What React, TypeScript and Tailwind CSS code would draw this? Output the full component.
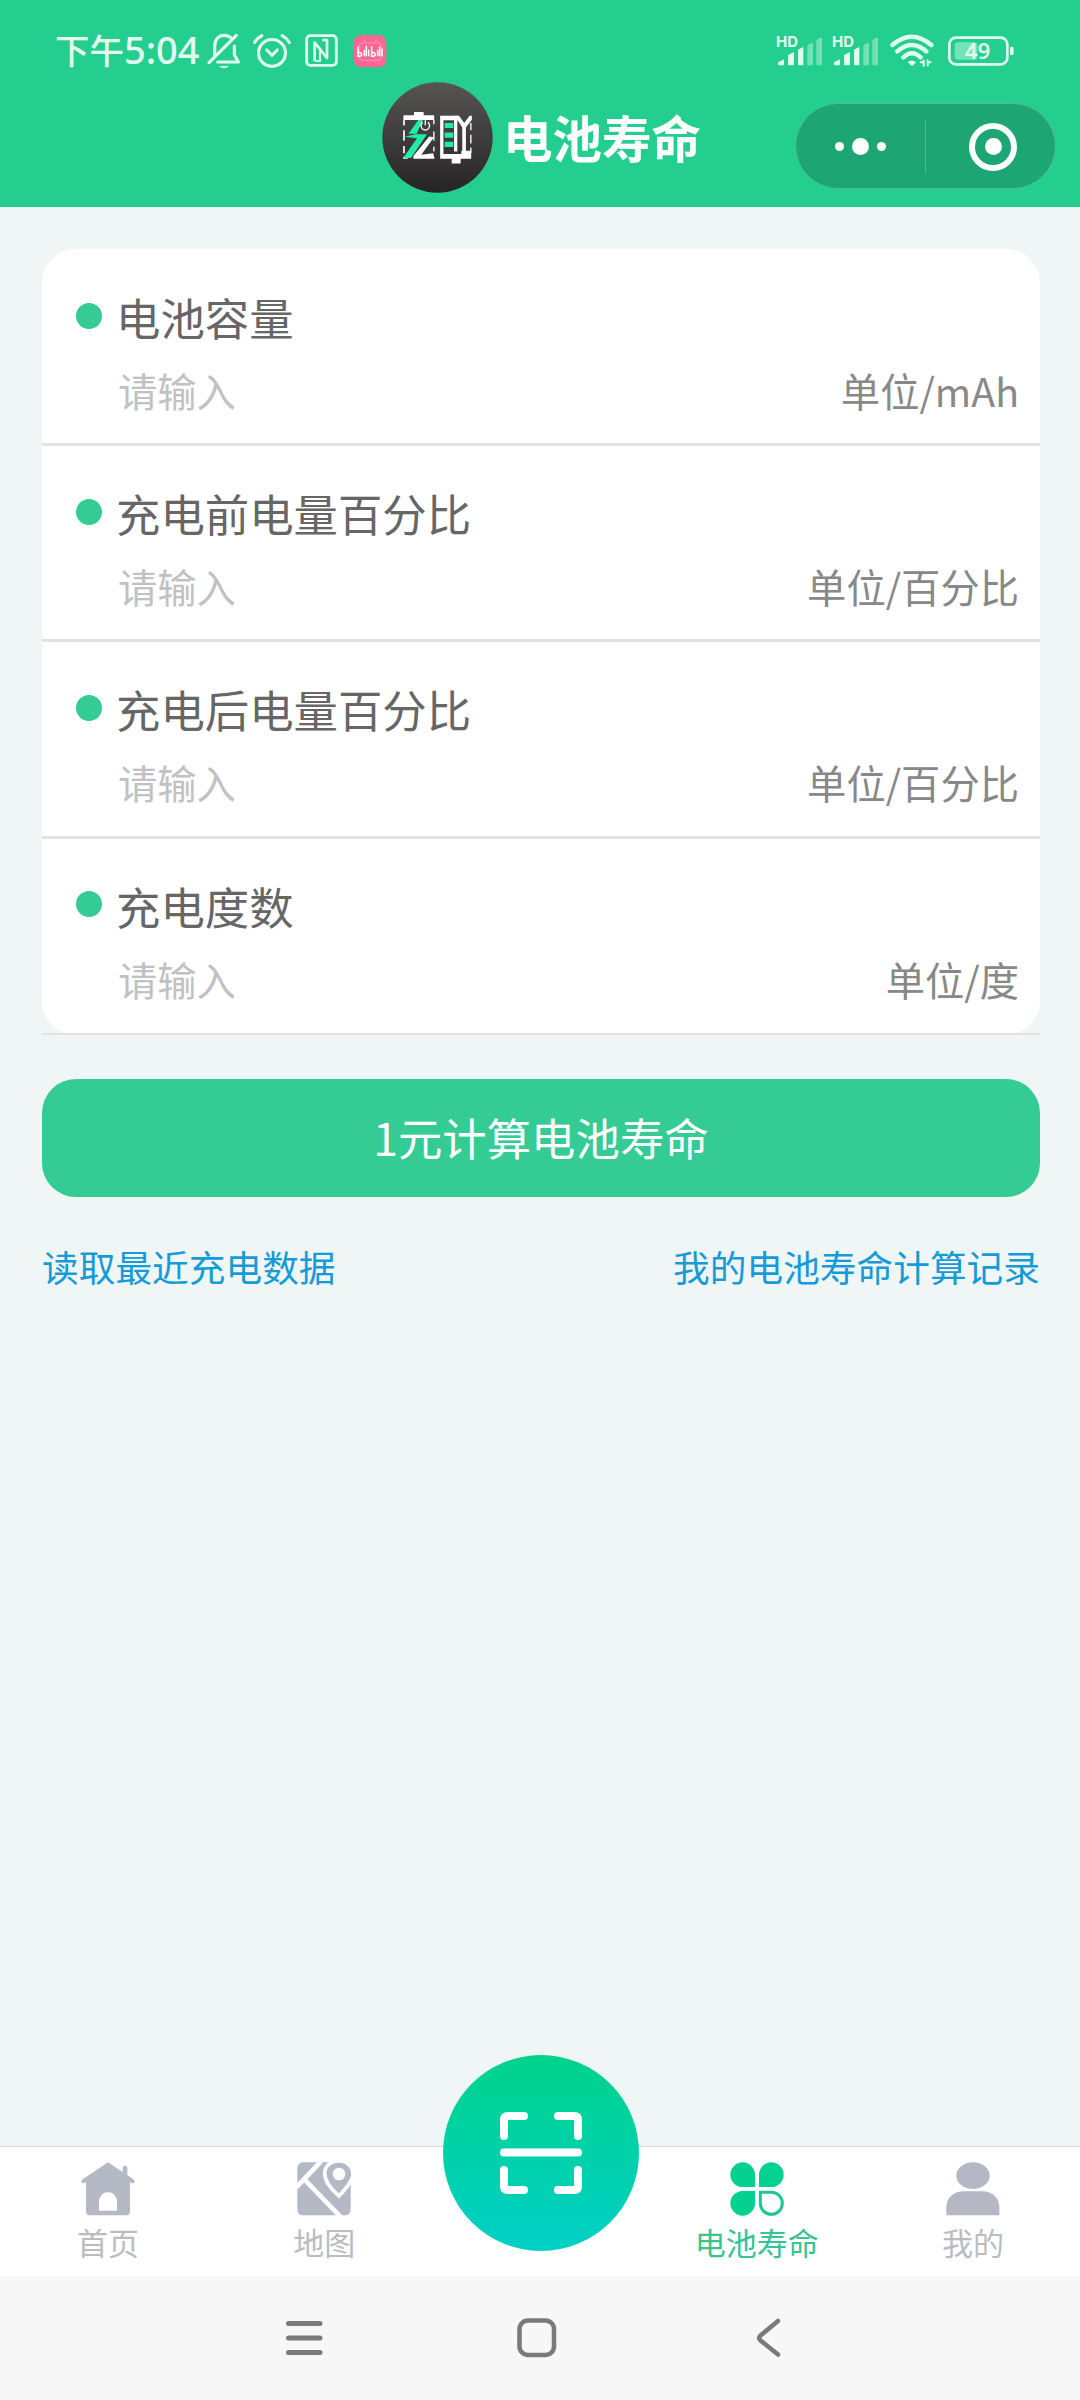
type FieldItem = {
  label: string;
  unit: string;
};

const fields: FieldItem[] = [
  { label: "电池容量", unit: "单位/mAh" },
  { label: "充电前电量百分比", unit: "单位/百分比" },
  { label: "充电后电量百分比", unit: "单位/百分比" },
  { label: "充电度数", unit: "单位/度" },
];

function SignalIcon() {
  return (
    <svg width="48" height="42" viewBox="0 -30 144 126" fill="#e2fbf1" className="-mt-[10px]">
      <text
        x="0"
        y="35"
        fontSize="45"
        fontWeight="700"
        textLength="66"
        lengthAdjust="spacingAndGlyphs"
        fontFamily="Inter, sans-serif"
      >
        HD
      </text>
      <path d="M6 82l18-9v15a3 3 0 0 1-3 3H9a3 3 0 0 1-3-3zM36 60l18-9v37a3 3 0 0 1-3 3H39a3 3 0 0 1-3-3zM66 44l16-8v52a3 3 0 0 1-3 3H69a3 3 0 0 1-3-3z" />
      <path
        opacity=".42"
        d="M94 30l17-8v66a3 3 0 0 1-3 3H97a3 3 0 0 1-3-3zM121 15l17-8v81a3 3 0 0 1-3 3h-11a3 3 0 0 1-3-3z"
      />
    </svg>
  );
}

function StatusBar() {
  return (
    <div className="flex h-[102px] items-center justify-between pr-[66px] pl-[55px] text-[#e2fbf1]">
      <div className="flex items-center">
        <p className="-mt-[4px] flex w-[148px] items-center leading-none font-medium">
          <span className="text-[34.5px]">下午</span>
          <span className="text-[38px] font-['Noto_Sans','Noto_Sans_CJK_SC',sans-serif]">
            5:04
          </span>
        </p>
        <svg
          className="ml-[4px]"
          width="36"
          height="38"
          viewBox="500 36 108 114"
          fill="none"
          stroke="currentColor"
          strokeWidth="9.500"
          strokeLinecap="round"
          strokeLinejoin="round"
        >
          <path d="M523 104V80c0-22 12-34 29-34 8 0 13 2 18 6M582 78v26l12 22h-62M506 128l82-82" />
          <path d="M536 138h30q-14 14-30 0z" fill="currentColor" stroke="none" />
        </svg>
        <svg
          className="ml-[10px]"
          width="38"
          height="36"
          viewBox="638 36 116 108"
          fill="none"
          stroke="currentColor"
          strokeWidth="9.500"
          strokeLinecap="round"
        >
          <circle cx="696" cy="96" r="41" />
          <path d="M680 87l16 16 16-16" />
          <path d="M643 64q8-14 22-21M749 64q-8-14-22-21" />
        </svg>
        <svg
          className="ml-[14px]"
          width="33"
          height="34"
          viewBox="795 42 99 102"
          fill="none"
          stroke="currentColor"
          strokeWidth="8.500"
          strokeLinejoin="round"
        >
          <rect x="800" y="47" width="89" height="89" rx="11" />
          <path d="M824 124V68l37 46V60h-14" strokeWidth="8" />
          <path d="M824 68l16 18v37h-14" strokeWidth="6" />
        </svg>
        <svg className="ml-[16px]" width="33" height="33" viewBox="0 0 99 99">
          <rect width="97" height="97" rx="22" fill="#fb6695" />
          <path
            d="M28 14l8 8M70 14l-8 8M26 24h46a10 10 0 0 1 10 10v32a10 10 0 0 1-10 10H26a10 10 0 0 1-10-10V34a10 10 0 0 1 10-10z"
            fill="none"
            stroke="#fd84ab"
            strokeWidth="5"
          />
          <path
            d="M12 35v29q12 0 11-6t-10-5M31 46v16M37 34v28M44 46v16M53 35v29q12 0 11-6t-10-5M71 46v16M77 36v26M84 42v20"
            fill="none"
            stroke="#fff"
            strokeWidth="4.500"
            strokeLinecap="round"
          />
        </svg>
      </div>

      <div className="flex items-center">
        <SignalIcon />
        <span className="ml-[8px] flex">
          <SignalIcon />
        </span>
        <svg
          className="ml-[10px]"
          width="44"
          height="36"
          viewBox="390 40 132 108"
          fill="none"
          stroke="currentColor"
          strokeWidth="13"
          strokeLinecap="round"
        >
          <path d="M397 76q58-50 117 0M412 95q43-38 87 0M430 113q26-24 52 0" />
          <path d="M443 128q12-11 25 0l-12 12z" fill="currentColor" stroke="none" />
          <path d="M482 128h9v-8v18M512 128h-9v12v-18" strokeWidth="6" />
        </svg>
        <svg className="ml-[14px]" width="66" height="32" viewBox="0 0 198 96">
          <rect
            x="4"
            y="8"
            width="174"
            height="80"
            rx="20"
            fill="none"
            stroke="currentColor"
            strokeWidth="8"
          />
          <rect x="20" y="22" width="68" height="52" rx="10" fill="#75e3ba" />
          <rect x="186" y="36" width="11" height="24" rx="4" fill="currentColor" />
          <text
            x="50"
            y="71"
            fontSize="66"
            fontWeight="600"
            textLength="77"
            lengthAdjust="spacingAndGlyphs"
            fill="currentColor"
            fontFamily="Noto Sans, sans-serif"
          >
            49
          </text>
        </svg>
      </div>
    </div>
  );
}

function Logo() {
  return (
    <svg width="111" height="111" viewBox="0 0 336 336">
      <defs>
        <linearGradient id="logoBg" x1="0" y1="0" x2="0" y2="1">
          <stop offset="0" stopColor="#575454" />
          <stop offset="1" stopColor="#262425" />
        </linearGradient>
      </defs>
      <circle cx="168" cy="168" r="167" fill="url(#logoBg)" />
      <g fill="#fff">
        <path d="M97 91h29v10h32v14H65v-14h32z" />
        <path d="M64 114h5v18h-5zM64 146h5v32h-5zM64 194h5v22h-5zM64 226h14v6H64zM155 114h4v14h-4zM155 196h4v14h-4zM155 150h4v28h-4z" />
        <path d="M143 165l14 2-38 53 36-4 4 16H95v-8z" />
        <path d="M176 102h54v14h-44v102h54v-10h30v24h-32v15h-27v-15h-35z" />
        <path d="M218 102h10v108h-10zM233 102l16 22 16-22h7v12l-18 24v80h-11v-80l-15-24v-12z" />
        <path d="M267 124h4v22h-4zM267 160h4v26h-4zM267 198h4v16h-4z" />
      </g>
      <path
        d="M110 115L80 157h28L68 166l38 4-42 60h24l48-72h-32l20-43z"
        fill="#22eba8"
      />
      <path d="M190 124h26v15h-26zM190 153h26v16h-26zM190 181h26v16h-26z" fill="#22eba8" />
      <path
        d="M123 122a13 13 0 1 0 16 0M131 116v15"
        fill="none"
        stroke="#fff"
        strokeWidth="4"
      />
    </svg>
  );
}

function Header() {
  return (
    <header className="relative h-[207px] bg-[#24ce8f]">
      <StatusBar />
      {/* the title hangs over the status bar a little */}
      <div className="-mt-5 flex items-center pl-[382px]">
        <Logo />
        <h1 className="-mt-[2px] ml-[10px] text-[49.5px] leading-none font-bold text-white">
          电池寿命
        </h1>
      </div>
      <div className="absolute top-[103px] right-[24px] flex h-[86px] w-[261px] items-center rounded-full border border-[#4fbd93] bg-[#1da673]">
        <div className="flex flex-1 items-center justify-center gap-[8px]">
          <i className="size-[9px] rounded-full bg-white" />
          <i className="size-[17px] rounded-full bg-white" />
          <i className="size-[9px] rounded-full bg-white" />
        </div>
        <div className="h-[51px] w-px bg-[#4fbd93]" />
        <div className="flex flex-1 items-center justify-center">
          <div className="mt-px mr-[-5px] flex size-[48px] items-center justify-center rounded-full border-[6px] border-white">
            <i className="size-[17px] rounded-full bg-white" />
          </div>
        </div>
      </div>
    </header>
  );
}

function Field({ label, unit }: FieldItem) {
  return (
    <div className="h-[196.200px] border-b-[3px] border-[#e2e2e2] pt-[41px] pr-[21px] pl-[34px] last:border-b-2">
      <div className="flex items-center">
        <i className="mt-[-3px] size-[26px] rounded-full bg-[#35cb95]" />
        <p className="ml-[14px] text-[44.4px] leading-[52px] text-[#666]">{label}</p>
      </div>
      <div className="mt-[20px] flex justify-between text-[39.3px] leading-[54px]">
        <p className="ml-[42px] text-[#c0c1c5]">请输入</p>
        <p className="text-[#888]">{unit}</p>
      </div>
    </div>
  );
}

function HomeIcon() {
  return (
    <svg width="54" height="54" viewBox="0 0 162 162" fill="#b5b9c6">
      <path d="M81 1l44 29V18a7 7 0 0 1 14 0v21l20 14q4 5 0 9-5 4-12-2v88a12 12 0 0 1-12 12H27a12 12 0 0 1-12-12V60q-7 6-12 2-4-4 0-9z" />
      <path d="M54 146v-26q2-29 27-29t27 29v26z" fill="#fff" />
    </svg>
  );
}

function MapIcon() {
  return (
    <svg width="54" height="54" viewBox="0 0 162 162">
      <rect x="1" y="1" width="160" height="159" rx="16" fill="#b5b9c6" />
      <path d="M-2 76L72 -2M20 50l112 116" stroke="#fff" strokeWidth="14" />
      <path
        d="M126-3c24 0 42 16 42 40 0 18-24 46-42 65C105 84 83 58 83 34 83 12 102-3 126-3z"
        fill="#b5b9c6"
        stroke="#fff"
        strokeWidth="11"
      />
      <circle cx="126" cy="36" r="19" fill="#fff" />
    </svg>
  );
}

function CloverIcon() {
  return (
    <svg width="54" height="54" viewBox="0 0 162 162" fill="#04d08f">
      <path d="M38 1a37 37 0 0 1 37 37v37H38a37 37 0 0 1 0-74zM124 1a37 37 0 0 1 0 74H87V38a37 37 0 0 1 37-37zM38 87h37v37a37 37 0 1 1-37-37z" />
      <path
        d="M91 91h33a33 33 0 1 1-33 33z"
        fill="none"
        stroke="#1bc892"
        strokeWidth="9"
      />
    </svg>
  );
}

function UserIcon() {
  return (
    <svg width="54" height="54" viewBox="0 0 162 162" fill="#b5b7c4">
      <ellipse cx="81" cy="41" rx="50" ry="40" />
      <path d="M1 160v-24c0-30 24-48 52-48h56c28 0 51 18 51 48v24z" />
    </svg>
  );
}

const tabs = [
  { label: "首页", icon: <HomeIcon /> },
  { label: "地图", icon: <MapIcon /> },
  null,
  { label: "电池寿命", icon: <CloverIcon />, active: true },
  { label: "我的", icon: <UserIcon /> },
];

function ScanButton() {
  return (
    <button className="absolute top-[-92px] left-[443px] flex size-[196px] items-center justify-center rounded-full bg-linear-to-b from-[#00d38a] to-[#00cfc6]">
      <svg
        width="82"
        height="82"
        viewBox="0 0 82 82"
        fill="none"
        stroke="#fff"
        strokeWidth="8"
        strokeLinecap="round"
      >
        <path d="M4 24V8q0-4 4-4h16M58 4h16q4 0 4 4v16M4 58v16q0 4 4 4h16M58 78h16q4 0 4-4V58M4 40.500h74" />
      </svg>
    </button>
  );
}

function TabBar() {
  return (
    <nav className="relative grid h-[130px] w-[1081px] grid-cols-5 border-t border-[#d5d8da] bg-white">
      {tabs.map((tab, index) =>
        tab ? (
          <div key={index} className="flex flex-col items-center pt-[15px]">
            {tab.icon}
            <span
              className={
                tab.active
                  ? "mt-[6px] text-[31px] leading-[40px] text-[#35c492]"
                  : "mt-[6px] text-[31px] leading-[40px] text-[#bbbcc2]"
              }
            >
              {tab.label}
            </span>
          </div>
        ) : (
          <div key={index} />
        ),
      )}
      <ScanButton />
    </nav>
  );
}

function SystemNav() {
  return (
    <div className="flex h-[124px] items-center justify-between bg-[#f7f7f7] pr-[298px] pl-[285px] text-[#7a7a7a]">
      <svg width="38" height="40" fill="none" stroke="currentColor" strokeWidth="5" strokeLinecap="round">
        <path d="M3.500 5.500h31.500M3.500 20h31.500M3.500 34.500h31.500" />
      </svg>
      <svg className="mr-[5px]" width="40" height="40" fill="none" stroke="currentColor" strokeWidth="4.500">
        <rect x="2.500" y="2.500" width="34.500" height="34.500" rx="8.500" />
      </svg>
      <svg width="26" height="40" fill="none" stroke="currentColor" strokeWidth="4.500" strokeLinecap="round">
        <path d="M22 3L4.500 17.500q-2.500 2.500 0 5L22 36.500" />
      </svg>
    </div>
  );
}

export default function App() {
  return (
    <div className="flex h-[2400px] w-[1080px] flex-col overflow-hidden bg-[#f0f6f6] font-['Noto_Sans_CJK_SC',sans-serif]">
      <Header />

      <main className="flex-1 pt-[42px] pr-[40px] pl-[42px]">
        <div className="relative pt-px">
          <div className="absolute inset-0 rounded-[34px] bg-white" />
          <div className="relative">
            {fields.map((field) => (
              <Field key={field.label} {...field} />
            ))}
          </div>
        </div>

        <button className="mt-[44px] h-[118px] w-full rounded-[34px] bg-[#35cb95] text-[44.4px] text-white">
          1元计算电池寿命
        </button>

        <div className="mt-[42px] flex justify-between text-[36.7px] leading-[54px] text-[#159bd7]">
          <a>读取最近充电数据</a>
          <a>我的电池寿命计算记录</a>
        </div>
      </main>

      <TabBar />
      <SystemNav />
    </div>
  );
}
